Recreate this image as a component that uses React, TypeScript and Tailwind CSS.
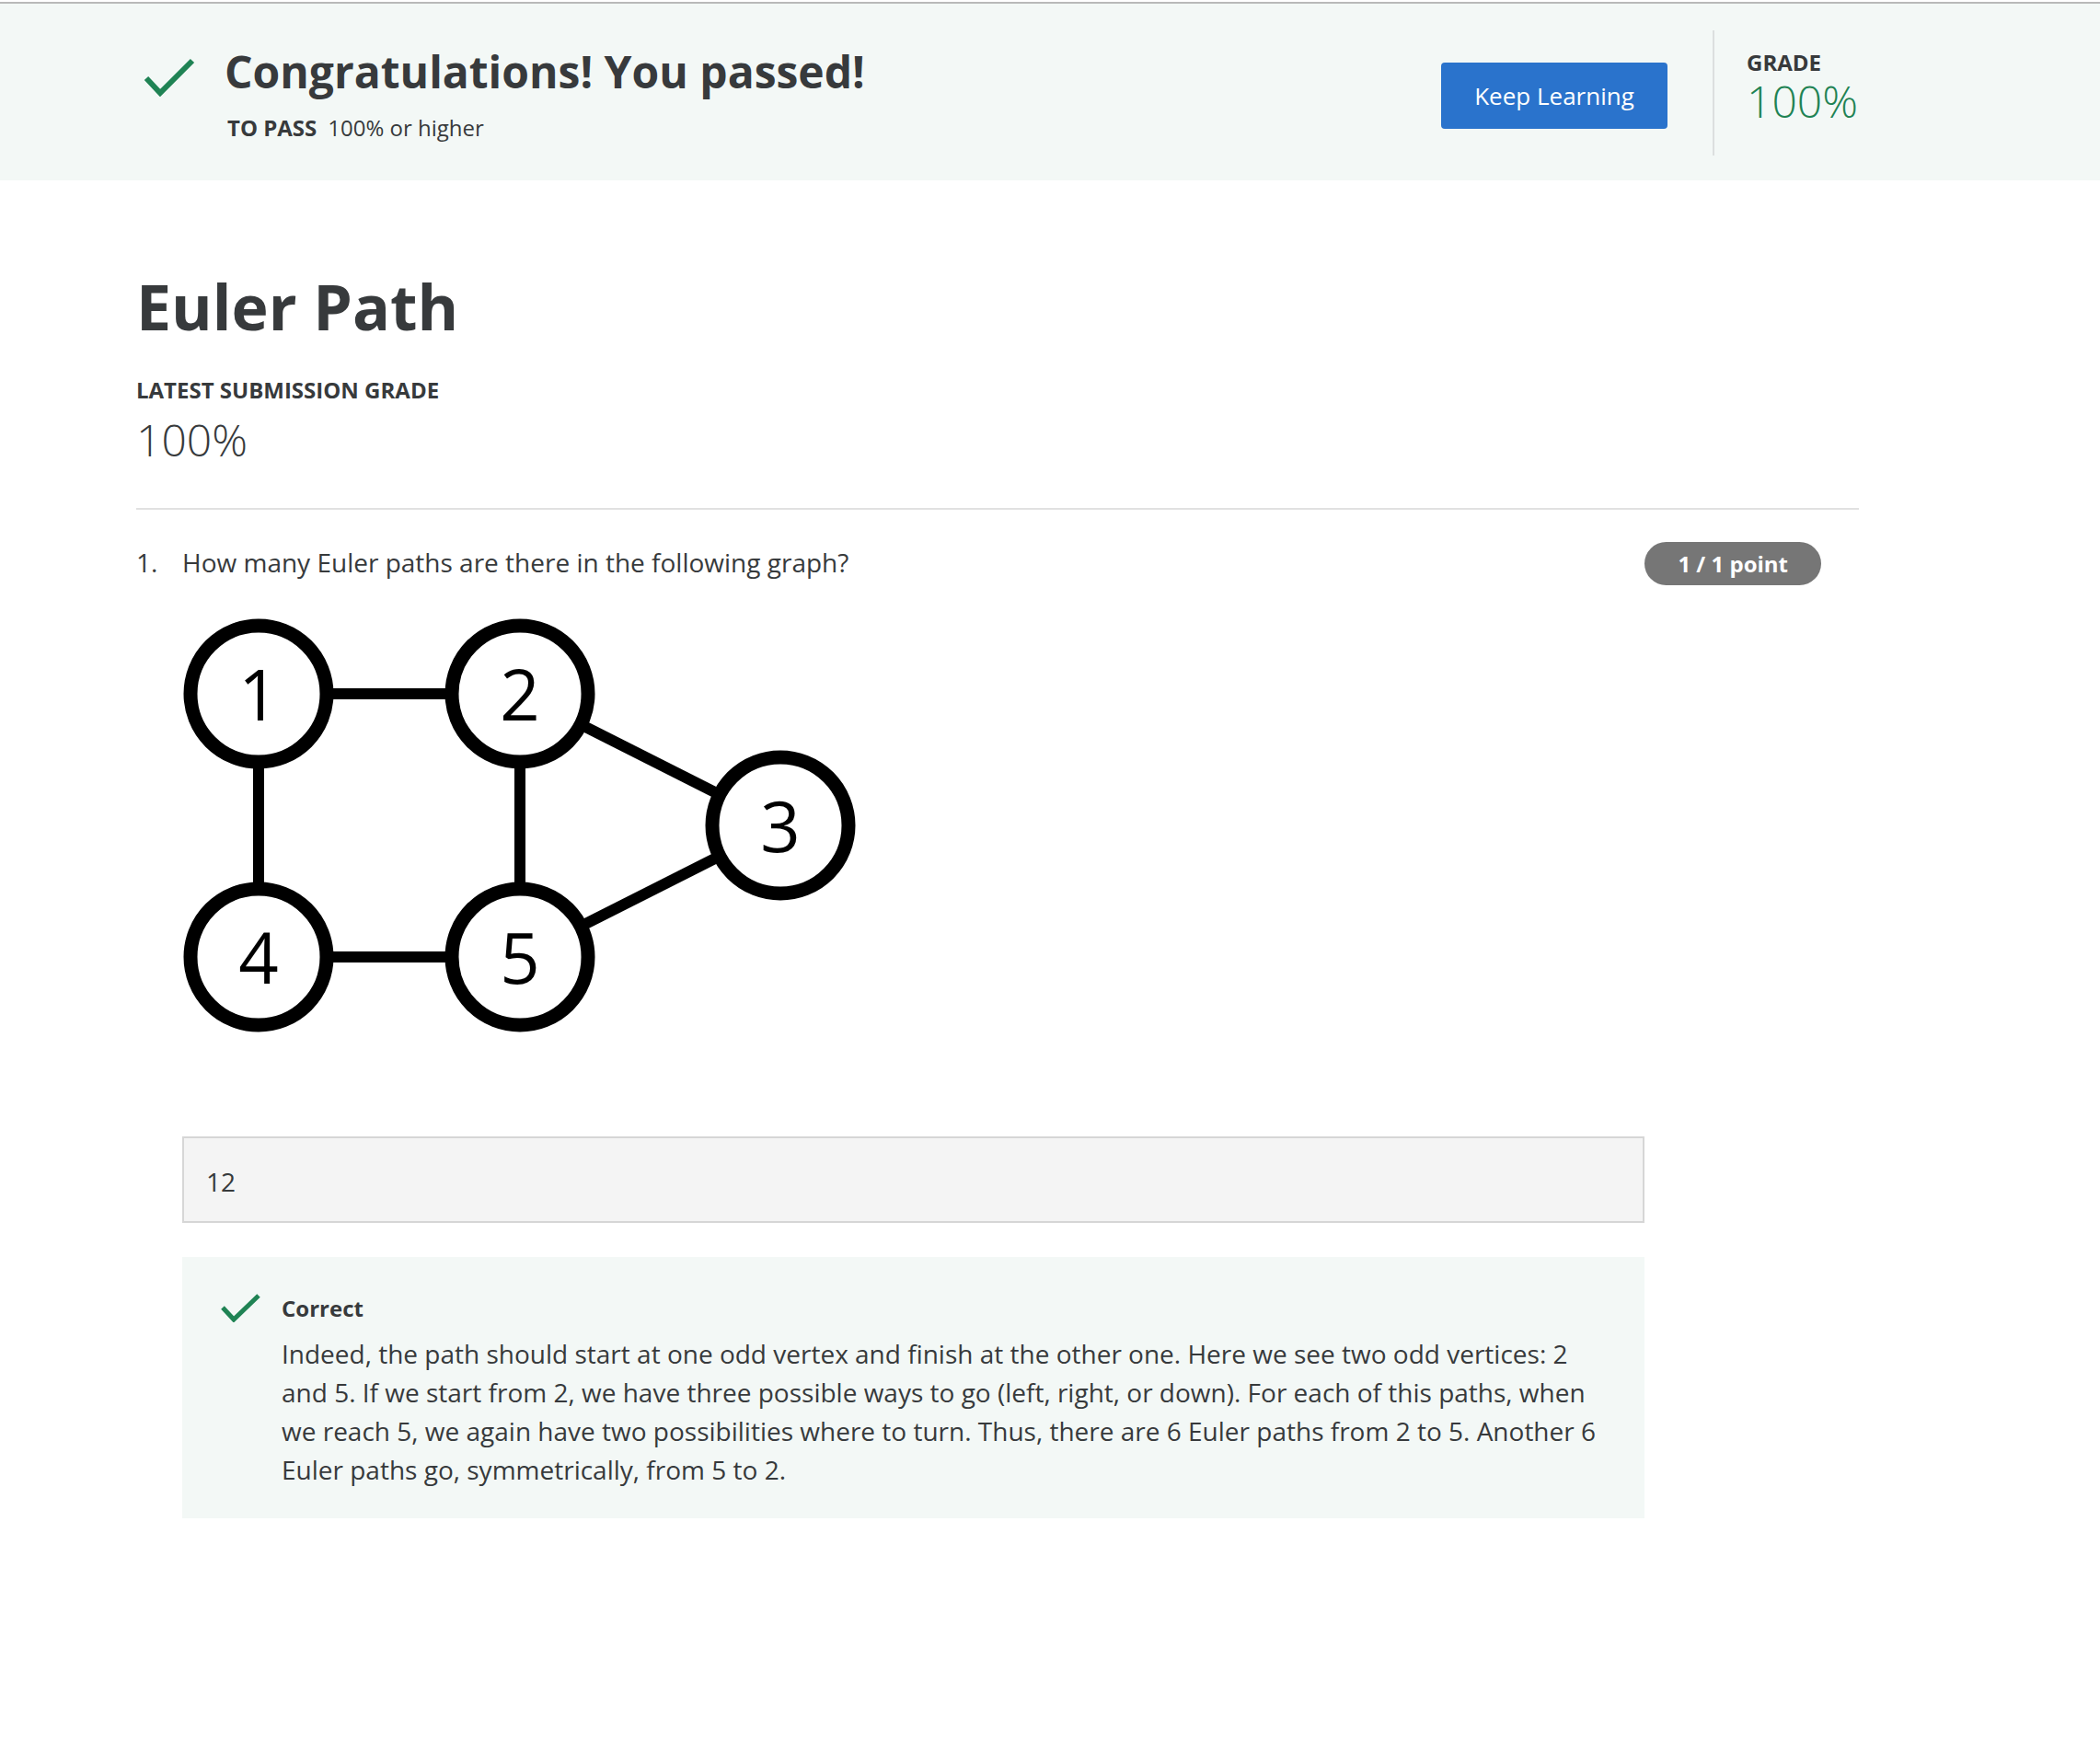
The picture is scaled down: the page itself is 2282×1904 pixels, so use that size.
import React from "react";

const font = { fontFamily: '"Open Sans", "Noto Sans", sans-serif' };

function Check({ className }: { className?: string }) {
  return (
    <svg viewBox="0 0 56 44" className={className} fill="none">
      <path d="M3 24 L18 40 L53 5" stroke="#1f8354" strokeWidth="6" strokeLinecap="butt" strokeLinejoin="miter" />
    </svg>
  );
}

function Graph() {
  const nodes = [
    { id: "1", x: 83, y: 93 },
    { id: "2", x: 367, y: 93 },
    { id: "3", x: 650, y: 236 },
    { id: "4", x: 83, y: 379 },
    { id: "5", x: 367, y: 379 },
  ];
  const edges: [number, number][] = [
    [0, 1],
    [0, 3],
    [1, 4],
    [3, 4],
    [1, 2],
    [4, 2],
  ];
  return (
    <svg width="740" height="470" viewBox="0 0 740 470" className="block">
      {edges.map(([a, b], i) => (
        <line
          key={i}
          x1={nodes[a].x}
          y1={nodes[a].y}
          x2={nodes[b].x}
          y2={nodes[b].y}
          stroke="#000"
          strokeWidth="12"
        />
      ))}
      {nodes.map((n) => (
        <g key={n.id}>
          <circle cx={n.x} cy={n.y} r="74" fill="#fff" stroke="#000" strokeWidth="15" />
          <text
            x={n.x}
            y={n.y + 29}
            textAnchor="middle"
            fontSize="76"
            fill="#000"
            style={{ fontFamily: '"Open Sans", "Noto Sans", sans-serif' }}
          >
            {n.id}
          </text>
        </g>
      ))}
    </svg>
  );
}

export default function App() {
  return (
    <div className="w-[2282px] min-h-[1904px] bg-white text-[#373a3c]" style={font}>
      <div className="pt-[2px]">
        <div className="h-[2px] bg-[#b9b9b9]" />
      </div>
      {/* Banner */}
      <div className="bg-[#f3f8f6] h-[192px]">
        <div className="ml-[148px] w-[1872px] flex">
          <div className="flex-1 flex pl-[8px]">
            <Check className="w-[56px] h-[44px] mt-[57px] shrink-0" />
            <div className="ml-[32px] pt-[42px]">
              <div className="text-[48px] leading-[64px] font-bold">Congratulations! You passed!</div>
              <div className="mt-[14px] text-[24px] leading-[30px] pl-[3px]">
                <span className="font-bold">TO PASS</span>
                <span className="ml-[12px]">100% or higher</span>
              </div>
            </div>
          </div>
          <div className="flex items-start">
            <button className="mt-[64px] w-[246px] h-[72px] rounded-[4px] bg-[#2a73cc] text-white text-[26px] flex items-center justify-center">
              Keep Learning
            </button>
            <div className="ml-[49px] mt-[29px] w-[2px] h-[136px] bg-[#dcdfdf]" />
            <div className="w-[157px] pl-[35px] pt-[52px]">
              <div className="text-[24px] leading-[24px] font-bold">GRADE</div>
              <div className="mt-[15px] text-[48px] leading-[30px] font-light text-[#1f8354]">100%</div>
            </div>
          </div>
        </div>
      </div>

      {/* Content */}
      <div className="ml-[148px] w-[1872px]">
        <h1 className="mt-[93px] text-[68px] leading-[88px] font-bold">Euler Path</h1>
        <div className="mt-[32px] text-[24px] leading-[30px] font-bold">LATEST SUBMISSION GRADE</div>
        <div className="mt-[11px] text-[48px] leading-[56px] font-light">100%</div>
        <div className="mt-[46px] h-[2px] bg-[#e1e1e1]" />

        <div className="mt-[36px] flex items-start">
          <div className="w-[50px] text-[28px] leading-[42px]">1.</div>
          <div className="flex-1 text-[28px] leading-[42px]">How many Euler paths are there in the following graph?</div>
          <div className="mr-[41px] -mt-[1px] h-[47px] px-[36px] rounded-full bg-[#767676] text-white text-[24px] font-bold flex items-center">
            1 / 1 point
          </div>
        </div>

        <div className="pl-[50px]">
          <div className="mt-[25px]">
            <Graph />
          </div>

          <div className="mt-[104px] w-[1589px] h-[94px] border-2 border-[#d6d6d6] bg-[#f4f4f4] flex items-center pl-[24px] pt-[3px] text-[28px]">
            12
          </div>

          <div className="mt-[37px] w-[1589px] bg-[#f3f8f6] pt-[40px] pb-[32px] pl-[41px] flex">
            <svg viewBox="0 0 44 31" className="w-[44px] h-[31px] shrink-0" fill="none">
              <path d="M3 15 L15 28 L42 2" stroke="#1f8354" strokeWidth="5" />
            </svg>
            <div className="ml-[23px] w-[1440px]">
              <div className="text-[24px] leading-[32px] font-bold">Correct</div>
              <p className="mt-[12px] text-[28px] leading-[42px]">
                Indeed, the path should start at one odd vertex and finish at the other one. Here we see two odd vertices: 2 and 5. If we start from 2, we have three possible ways to go (left, right, or down). For each of this paths, when we reach 5, we again have two possibilities where to turn. Thus, there are 6 Euler paths from 2 to 5. Another 6 Euler paths go, symmetrically, from 5 to 2.
              </p>
            </div>
          </div>
        </div>
      </div>
    </div>
  );
}
